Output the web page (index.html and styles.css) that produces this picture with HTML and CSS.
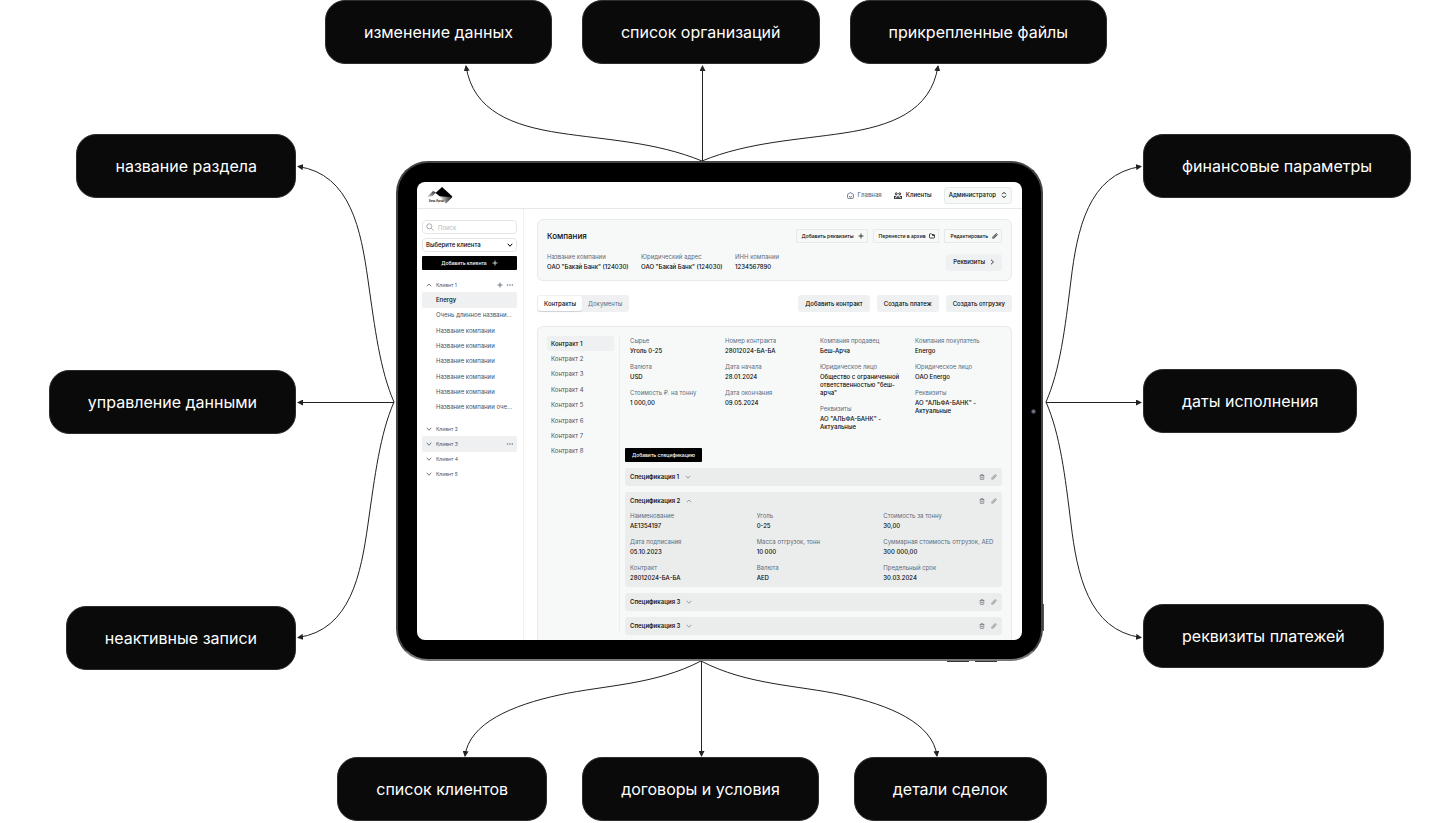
FILE: index.html
```html
<!DOCTYPE html>
<html lang="ru">
<head>
<meta charset="utf-8">
<meta name="viewport" content="width=device-width, initial-scale=1">
<title>Клиенты</title>
<link rel="stylesheet" href="styles.css">
</head>
<body>
<svg class="sprite" width="0" height="0" aria-hidden="true">
  <defs>
    <marker id="tip" viewBox="0 0 6 6" refX="5" refY="3" markerWidth="6" markerHeight="6" orient="auto" markerUnits="userSpaceOnUse"><path d="M0 0 6 3 0 6z" fill="#222"/></marker>
  </defs>
  <symbol id="up" viewBox="0 0 12 12"><path d="M1.500 8.500 6 4l4.500 4.500"/></symbol>
  <symbol id="down" viewBox="0 0 12 12"><path d="M1.500 3.500 6 8.500l4.500-5"/></symbol>
  <symbol id="right" viewBox="0 0 12 12"><path d="m4 1.500 5 4.500-5 4.500"/></symbol>
  <symbol id="plus" viewBox="0 0 12 12"><path d="M6 1v10M1 6h10"/></symbol>
  <symbol id="dots" viewBox="0 0 12 12"><path d="M0 6h2.500M4.800 6h2.500M9.500 6H12"/></symbol>
  <symbol id="search" viewBox="0 0 12 12"><circle cx="5" cy="5" r="3.800"/><path d="m8 8 3.500 3.500"/></symbol>
  <symbol id="home" viewBox="0 0 12 12"><path d="M1 4 6 1l5 3v5.500q0 1.500-1.500 1.500h-7Q1 11 1 9.500zM3.500 7.500q2.500 2.500 5 0"/></symbol>
  <symbol id="users" viewBox="0 0 14 12"><circle cx="4" cy="3" r="1.700"/><circle cx="10" cy="3" r="1.700"/><path d="M1 7.500h3M10 7.500h3M1 7v4M13 7v4M0 11h14M7 6.500v1.500M4.500 11q0-2.500 2.500-2.500T9.500 11"/></symbol>
  <symbol id="sort" viewBox="0 0 12 12"><path d="M2 4.500Q6-2 10 4.500M2 7.500q4 6.500 8 0"/></symbol>
  <symbol id="folder" viewBox="0 0 12 12"><path d="M1 3q0-1.500 1.500-1.500h2L6 3h3.500Q11 3 11 4.500v4Q11 10 9.500 10h-7Q1 10 1 8.500zM7 3v2h4"/></symbol>
  <symbol id="pen" viewBox="0 0 12 12"><path d="M1.500 10.500 2 7.500 7.500 1.800q1.200-1 2.300.1t.2 2.300L4.500 10zM4.500 7.500l3-3"/></symbol>
  <symbol id="trash" viewBox="0 0 12 12"><path d="M1.500 3h9M4 3V1.200h4V3M2.500 3v6.500Q2.500 11 4 11h4q1.500 0 1.500-1.500V3M5 5.500v3M7 5.500v3"/></symbol>
</svg>

<main class="diagram">
  <ul class="notes notes-top">
    <li class="note">изменение данных</li>
    <li class="note">список организаций</li>
    <li class="note">прикрепленные файлы</li>
  </ul>

  <div class="side side-left">
    <ul class="notes notes-side">
      <li class="note">название раздела</li>
      <li class="note">управление данными</li>
      <li class="note">неактивные записи</li>
    </ul>
    <svg class="links" width="100" height="536" viewBox="0 0 100 536" aria-hidden="true">
      <path d="M98 268C84 236 79 195 72 146S55 40 2 32.500"/>
      <path d="M98 268.500H2"/>
      <path d="M98 268C84 300 79 341 72 390S55 496 2 503.500"/>
    </svg>
  </div>

  <div class="center">
    <svg class="links" width="100%" height="97" viewBox="0 0 648 97" aria-hidden="true">
      <path d="M306 97C260 78 210 76 164 69S77 48 70 2"/>
      <path d="M306.500 97V2"/>
      <path d="M306 97C352 78 402 76 448 69S535 48 542 2"/>
    </svg>

    <div class="tablet">
      <span class="camera"></span>
      <span class="side-key"></span>
      <div class="screen">
        <header class="topbar">
          <svg class="logo" viewBox="0 0 26 17" role="img" aria-label="Беш-Арча">
            <defs>
              <linearGradient id="g1" x1="1" y1="0" x2="0" y2="1"><stop offset="0" stop-color="#222"/><stop offset="1" stop-color="#ddd"/></linearGradient>
              <linearGradient id="g2" x1="0" y1="0" x2="1" y2="0"><stop offset="0" stop-color="#fff"/><stop offset="1" stop-color="#111"/></linearGradient>
            </defs>
            <path d="M0 10 6 4l3 1.500L5.500 9z" fill="url(#g1)"/>
            <path d="M8.500 6 15 0l10.500 9.500L22 11 13 9.500z" fill="#000"/>
            <path d="M12 9.500 25.500 10 19 16.500z" fill="url(#g2)"/>
            <text class="logo-text" x="2" y="15">Беш Арча</text>
          </svg>
          <nav class="nav">
            <a class="nav-link muted" href="#"><svg class="icon icon-home"><use href="#home"/></svg>Главная</a>
            <a class="nav-link" href="#"><svg class="icon icon-users"><use href="#users"/></svg>Клиенты</a>
            <button class="role">Администратор<svg class="icon"><use href="#sort"/></svg></button>
          </nav>
        </header>

        <div class="body">
          <aside class="sidebar">
            <label class="field"><svg class="icon icon-search"><use href="#search"/></svg><input class="input" type="search" placeholder="Поиск" aria-label="Поиск"></label>
            <label class="field"><select class="select" aria-label="Клиент"><option>Выберите клиента</option></select><svg class="icon strong"><use href="#down"/></svg></label>
            <button class="dark wide">Добавить клиента<svg class="icon"><use href="#plus"/></svg></button>

            <ul class="tree tree-open">
              <li class="row"><svg class="icon"><use href="#up"/></svg><span class="row-name small">Клиент 1</span><svg class="icon"><use href="#plus"/></svg><svg class="icon dots"><use href="#dots"/></svg></li>
              <li class="row child active">Energy</li>
              <li class="row child">Очень длинное названи...</li>
              <li class="row child">Название компании</li>
              <li class="row child">Название компании</li>
              <li class="row child">Название компании</li>
              <li class="row child">Название компании</li>
              <li class="row child">Название компании</li>
              <li class="row child">Название компании оче...</li>
            </ul>
            <ul class="tree tree-closed">
              <li class="row"><svg class="icon"><use href="#down"/></svg><span class="row-name small">Клиент 2</span></li>
              <li class="row hovered"><svg class="icon"><use href="#down"/></svg><span class="row-name small">Клиент 3</span><svg class="icon dots"><use href="#dots"/></svg></li>
              <li class="row"><svg class="icon"><use href="#down"/></svg><span class="row-name small">Клиент 4</span></li>
              <li class="row"><svg class="icon"><use href="#down"/></svg><span class="row-name small">Клиент 5</span></li>
            </ul>
          </aside>

          <section class="content">
            <div class="card company">
              <div class="line">
                <h1 class="title">Компания</h1>
                <div class="actions">
                  <button class="outline">Добавить реквизиты<svg class="icon"><use href="#plus"/></svg></button>
                  <button class="outline">Перенести в архив<svg class="icon"><use href="#folder"/></svg></button>
                  <button class="outline">Редактировать<svg class="icon"><use href="#pen"/></svg></button>
                </div>
              </div>
              <div class="line">
                <dl class="facts company-facts">
                  <div><dt>Название компании</dt><dd>ОАО "Бакай Банк" (124030)</dd></div>
                  <div><dt>Юридический адрес</dt><dd>ОАО "Бакай Банк" (124030)</dd></div>
                  <div><dt>ИНН компании</dt><dd>1234567890</dd></div>
                </dl>
                <button class="soft">Реквизиты<svg class="icon"><use href="#right"/></svg></button>
              </div>
            </div>

            <div class="line toolbar">
              <div class="tabs" role="tablist">
                <button class="tab selected" role="tab" aria-selected="true">Контракты</button>
                <button class="tab" role="tab" aria-selected="false">Документы</button>
              </div>
              <div class="actions loose">
                <button class="soft">Добавить контракт</button>
                <button class="soft">Создать платеж</button>
                <button class="soft">Создать отгрузку</button>
              </div>
            </div>

            <div class="card contracts">
              <ul class="tree contract-list">
                <li class="row current">Контракт 1</li>
                <li class="row">Контракт 2</li>
                <li class="row">Контракт 3</li>
                <li class="row">Контракт 4</li>
                <li class="row">Контракт 5</li>
                <li class="row">Контракт 6</li>
                <li class="row">Контракт 7</li>
                <li class="row">Контракт 8</li>
              </ul>
              <div class="contract">
                <div class="contract-facts">
                  <dl class="facts">
                    <div><dt>Сырье</dt><dd>Уголь 0-25</dd></div>
                    <div><dt>Валюта</dt><dd>USD</dd></div>
                    <div><dt>Стоимость ₽. на тонну</dt><dd>1 000,00</dd></div>
                  </dl>
                  <dl class="facts">
                    <div><dt>Номер контракта</dt><dd>28012024-БА-БА</dd></div>
                    <div><dt>Дата начала</dt><dd>28.01.2024</dd></div>
                    <div><dt>Дата окончания</dt><dd>09.05.2024</dd></div>
                  </dl>
                  <dl class="facts">
                    <div><dt>Компания продавец</dt><dd>Беш-Арча</dd></div>
                    <div><dt>Юридическое лицо</dt><dd>Общество с ограниченной<br>ответственностью "беш-<br>арча"</dd></div>
                    <div><dt>Реквизиты</dt><dd>АО "АЛЬФА-БАНК" -<br>Актуальные</dd></div>
                  </dl>
                  <dl class="facts">
                    <div><dt>Компания покупатель</dt><dd>Energo</dd></div>
                    <div><dt>Юридическое лицо</dt><dd>ОАО Energo</dd></div>
                    <div><dt>Реквизиты</dt><dd>АО "АЛЬФА-БАНК" -<br>Актуальные</dd></div>
                  </dl>
                </div>
                <button class="dark">Добавить спецификацию</button>

                <article class="spec">
                  <h2 class="spec-head">Спецификация 1<svg class="icon"><use href="#down"/></svg><span class="tools"><svg class="icon"><use href="#trash"/></svg><svg class="icon"><use href="#pen"/></svg></span></h2>
                </article>
                <article class="spec">
                  <h2 class="spec-head">Спецификация 2<svg class="icon"><use href="#up"/></svg><span class="tools"><svg class="icon"><use href="#trash"/></svg><svg class="icon"><use href="#pen"/></svg></span></h2>
                  <dl class="facts spec-facts">
                    <div><dt>Наименование</dt><dd>AE1354197</dd></div>
                    <div><dt>Уголь</dt><dd>0-25</dd></div>
                    <div><dt>Стоимость за тонну</dt><dd>30,00</dd></div>
                    <div><dt>Дата подписания</dt><dd>05.10.2023</dd></div>
                    <div><dt>Масса отгрузок, тонн</dt><dd>10 000</dd></div>
                    <div><dt>Суммарная стоимость отгрузок, AED</dt><dd>300 000,00</dd></div>
                    <div><dt>Контракт</dt><dd>28012024-БА-БА</dd></div>
                    <div><dt>Валюта</dt><dd>AED</dd></div>
                    <div><dt>Предельный срок</dt><dd>30.03.2024</dd></div>
                  </dl>
                </article>
                <article class="spec">
                  <h2 class="spec-head">Спецификация 3<svg class="icon"><use href="#down"/></svg><span class="tools"><svg class="icon"><use href="#trash"/></svg><svg class="icon"><use href="#pen"/></svg></span></h2>
                </article>
                <article class="spec">
                  <h2 class="spec-head">Спецификация 3<svg class="icon"><use href="#down"/></svg><span class="tools"><svg class="icon"><use href="#trash"/></svg><svg class="icon"><use href="#pen"/></svg></span></h2>
                </article>
              </div>
            </div>
          </section>
        </div>
      </div>
      <span class="foot-keys"></span>
    </div>

    <svg class="links" width="100%" height="96" viewBox="0 0 648 96" aria-hidden="true">
      <path d="M305 0C259 24 209 24 163 34S73 62 69 95"/>
      <path d="M305.500 0V95"/>
      <path d="M305 0C351 24 401 24 447 34S537 62 541 95"/>
    </svg>
  </div>

  <div class="side side-right">
    <svg class="links" width="99" height="536" viewBox="0 0 99 536" aria-hidden="true">
      <path d="M2 268C16 236 21 195 27 146S44 40 97 32.500"/>
      <path d="M2 268.500H97"/>
      <path d="M2 268C16 300 21 341 27 390S44 496 97 503.500"/>
    </svg>
    <ul class="notes notes-side">
      <li class="note">финансовые параметры</li>
      <li class="note">даты исполнения</li>
      <li class="note">реквизиты платежей</li>
    </ul>
  </div>

  <ul class="notes notes-bottom">
    <li class="note">список клиентов</li>
    <li class="note">договоры и условия</li>
    <li class="note">детали сделок</li>
  </ul>
</main>
</body>
</html>
```
FILE: styles.css
```css
* { box-sizing: border-box; }

body {
  margin: 0;
  background: #fff;
  font-family: Inter, "Liberation Sans", sans-serif;
  color: #0a0a0a;
}

ul, dl, dd, h1, h2 { margin: 0; padding: 0; list-style: none; }

button, input, select {
  margin: 0;
  padding: 0;
  border: 0;
  background: none;
  font: inherit;
  color: inherit;
}

.sprite { position: absolute; }

/* diagram */
.diagram {
  display: grid;
  grid-template-columns: 1fr minmax(648px, 45%) 1fr;
}

.notes { display: flex; }
.notes-top, .notes-bottom { grid-column: 1 / -1; justify-content: center; }
.notes-top { gap: 30px; padding-right: 8px; }
.notes-bottom { gap: 35px; padding-right: 56px; }
.notes-side { flex-direction: column; gap: 172px; }
.side-left .notes-side { align-items: flex-end; }
.side-right .notes-side { align-items: flex-start; gap: 171px; }

.note {
  display: flex;
  align-items: center;
  height: 64px;
  padding: 0 38px;
  border: 1px solid #2b2e2e;
  border-radius: 20px;
  background: #0a0a0a;
  color: #fff;
  font-size: 16px;
  line-height: 24px;
  white-space: nowrap;
}

.side { display: flex; align-items: flex-start; padding-top: 70px; }
.side-left { justify-content: flex-end; }

.links { display: block; flex: none; }
.links path { fill: none; stroke: #222; stroke-width: 1; marker-end: url(#tip); }

/* tablet */
.tablet {
  position: relative;
  margin-right: 1px;
  padding: 19px;
  border: 2px solid #444;
  border-bottom-color: #777;
  border-radius: 32px;
  background: #000;
}

.camera {
  position: absolute;
  right: 5px;
  top: 50%;
  width: 5px;
  height: 5px;
  margin-top: -2px;
  border: 1px solid #333;
  border-radius: 50%;
  background: #6f7890;
}

.side-key {
  position: absolute;
  right: -3px;
  bottom: 28px;
  width: 1px;
  height: 27px;
  background: #555;
}

.foot-keys {
  position: absolute;
  right: 44px;
  bottom: -3px;
  width: 50px;
  height: 1px;
  background: linear-gradient(90deg, #333 22px, transparent 22px, transparent 28px, #333 28px);
}

.screen {
  display: flex;
  flex-direction: column;
  aspect-ratio: 605 / 458;
  overflow: hidden;
  border-radius: 8px;
  background: #fff;
  font-size: 6px;
  line-height: 8px;
  white-space: nowrap;
}

.icon {
  flex: none;
  width: 6px;
  height: 6px;
  fill: none;
  stroke: currentColor;
  stroke-width: 1.500;
}

.topbar {
  display: flex;
  flex: none;
  align-items: center;
  justify-content: space-between;
  height: 27px;
  padding: 0 10px;
  border-bottom: 1px solid #e6e9ea;
}

.logo { width: 26px; height: 17px; }
.logo-text { font-size: 3px; font-weight: 600; }

.nav { display: flex; align-items: center; gap: 12px; font-weight: 500; }
.nav-link { display: flex; align-items: center; gap: 4px; color: #0a0a0a; text-decoration: none; }
.nav-link.muted { color: #5b6b7b; }
.icon-home { width: 7px; height: 7px; }
.icon-users { width: 8px; height: 7px; }

.role {
  display: flex;
  align-items: center;
  justify-content: center;
  gap: 5px;
  height: 17px;
  padding: 0 4px;
  border: 1px solid #e6e9ea;
  border-radius: 3px;
  background: #f7f9f9;
  line-height: 8px;
}

.body { display: flex; flex: 1; min-height: 0; }

/* sidebar */
.sidebar {
  display: flex;
  flex: none;
  flex-direction: column;
  gap: 4px;
  width: 107px;
  padding: 11px 6px 0 5px;
  border-right: 1px solid #eef0f1;
}

.field {
  display: flex;
  flex: none;
  align-items: center;
  gap: 4px;
  height: 14px;
  padding: 0 3px;
  border: 1px solid #e3e6e8;
  border-radius: 4px;
}

.input, .select { flex: 1; min-width: 0; height: 12px; outline: 0; appearance: none; }
.select { font-weight: 500; }
.input::placeholder { color: #b4bcc4; opacity: 1; }
.icon-search { width: 8px; height: 8px; color: #7b8794; stroke-width: 1; }
.strong { stroke-width: 2; }

.dark {
  display: flex;
  align-items: center;
  justify-content: center;
  gap: 5px;
  align-self: flex-start;
  flex: none;
  height: 14px;
  padding: 0 7px;
  border-radius: 1px;
  background: #000;
  color: #fff;
  font-size: 5px;
  font-weight: 500;
  line-height: 8px;
}
.dark.wide { align-self: stretch; }

.tree { display: grid; flex: none; grid-auto-rows: 1fr; color: #44525f; }
.tree-open { height: 138px; margin-top: 3px; }
.tree-closed { height: 61px; margin-top: 2px; }

.row { display: flex; align-items: center; gap: 4px; padding: 0 4px; border-radius: 2px; }
.row-name { flex: 1; }
.small { font-size: 5px; }
.child { padding-left: 14px; }
.dots { stroke-width: 2; }
.active, .hovered, .current { background: #eef0f1; }
.active, .current { color: #0a0a0a; font-weight: 500; }

/* content */
.content {
  display: flex;
  flex: 1;
  flex-direction: column;
  gap: 14px;
  min-width: 0;
  padding: 10px 10px 0 13px;
}

.card { border: 1px solid #e6eaea; border-radius: 6px; background: #f7f9f9; }
.company { display: grid; gap: 10px; padding: 9px; }
.line { display: flex; align-items: center; justify-content: space-between; }
.title { font-size: 8px; font-weight: 500; line-height: 14px; }
.actions { display: flex; gap: 5px; }
.actions.loose { gap: 7px; }

.outline {
  display: flex;
  align-items: center;
  gap: 4px;
  height: 14px;
  padding: 0 3px 0 5px;
  border: 1px solid #e6e9ea;
  border-radius: 1px;
  font-size: 5px;
  font-weight: 500;
  line-height: 8px;
}

.soft {
  display: flex;
  align-items: center;
  gap: 4px;
  height: 17px;
  padding: 0 7px;
  border-radius: 3px;
  background: #eef0f1;
  font-weight: 500;
  line-height: 8px;
}

.facts { display: grid; align-content: start; gap: 8px; }
.facts dt { margin-bottom: 2px; color: #5b6b7b; }
.facts dd { font-weight: 500; }
.company-facts { flex: 1; grid-template-columns: repeat(3, 94px); gap: 0; }

.tabs { display: flex; height: 17px; padding: 1px; border-radius: 3px; background: #eef0f1; }
.tab { padding: 0 6px; border-radius: 3px; color: #5b6b7b; line-height: 8px; }
.tab.selected { background: #fff; color: #0a0a0a; font-weight: 500; box-shadow: 0 1px 1px #ccd0d2; }

.contracts {
  display: flex;
  flex: 1;
  gap: 5px;
  min-height: 0;
  padding: 9px 9px 0;
  border-bottom: 0;
  border-radius: 6px 6px 0 0;
}

.contract-list {
  width: 73px;
  height: 297px;
  padding: 0 5px 174px 0;
  border-right: 1px solid #eceeef;
}
.contract { display: flex; flex: 1; flex-direction: column; gap: 6px; min-width: 0; padding-top: 1px; }
.contract-facts { display: grid; grid-template-columns: repeat(4, 95px); flex: none; margin-bottom: 11px; padding-left: 5px; }

.spec { flex: none; border-radius: 3px; background: #ebeded; }
.spec-head { display: flex; align-items: center; gap: 6px; height: 18px; padding: 0 5px; font-size: 6px; font-weight: 600; line-height: 8px; color: #1c2227; }
.spec-head .icon { color: #44525f; stroke-width: 1; }
.tools { display: flex; gap: 6px; margin-left: auto; }
.spec-facts { grid-template-columns: repeat(3, minmax(0, 1fr)); padding: 2px 0 5px 5px; }
```
